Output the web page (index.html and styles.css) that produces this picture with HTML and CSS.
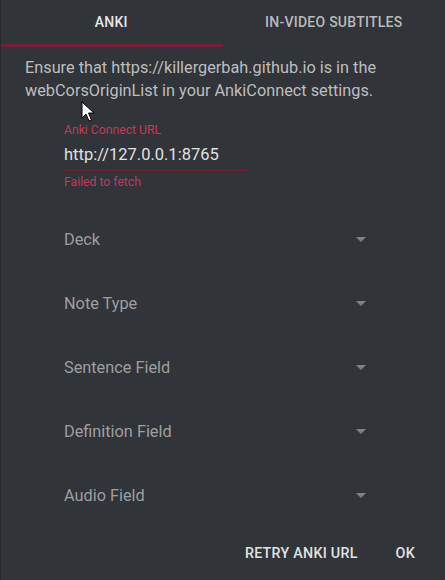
FILE: index.html
```html
<!DOCTYPE html>
<html>
<head>
<meta charset="utf-8">
<link rel="stylesheet" href="styles.css">
</head>
<body>
<div class="dialog">
  <div class="tabs">
    <div class="tab active">ANKI</div>
    <div class="tab">IN-VIDEO SUBTITLES</div>
  </div>
  <div class="content">
    <p class="intro">Ensure that https://killergerbah.github.io is in the webCorsOriginList in your AnkiConnect settings.</p>
    <div class="form">
      <div class="textfield">
        <div class="tf-label">Anki Connect URL</div>
        <div class="tf-input">http://127.0.0.1:8765</div>
        <div class="tf-helper">Failed to fetch</div>
      </div>
      <div class="selects">
        <div class="select"><span class="sel-label">Deck</span><span class="arrow"></span></div>
        <div class="select"><span class="sel-label">Note Type</span><span class="arrow"></span></div>
        <div class="select"><span class="sel-label">Sentence Field</span><span class="arrow"></span></div>
        <div class="select"><span class="sel-label">Definition Field</span><span class="arrow"></span></div>
        <div class="select"><span class="sel-label">Audio Field</span><span class="arrow"></span></div>
      </div>
    </div>
  </div>
  <div class="actions">
    <span class="btn">RETRY ANKI URL</span>
    <span class="btn">OK</span>
  </div>
  <svg class="cursor" width="14" height="22" viewBox="0 0 14 22"><path d="M1 1 L1 17 L5 13 L8 20 L10.5 19 L7.5 12 L13 12 Z" fill="#fff" stroke="#000" stroke-width="1"/></svg>
</div>
</body>
</html>
```
FILE: styles.css
```css
html, body {
  margin: 0;
  padding: 0;
  background: #313438;
}
.dialog {
  position: relative;
  width: 445px;
  height: 580px;
  box-sizing: border-box;
  border-left: 1px solid #26282b;
  font-family: Roboto, "Liberation Sans", sans-serif;
  display: flex;
  flex-direction: column;
  overflow: hidden;
}
.tabs {
  display: flex;
  height: 47px;
  margin-left: -1px;
}
.tab {
  flex: 1;
  display: flex;
  align-items: center;
  justify-content: center;
  font-size: 14px;
  font-weight: 500;
  letter-spacing: 0.25px;
  color: #b9babb;
  padding-bottom: 3px;
  box-sizing: border-box;
}
.tab.active {
  color: #e6e6e6;
  border-bottom: 3px solid #7b1c3a;
  padding-bottom: 0;
}
.content {
  padding: 9px 0 0 24px;
  flex: 1;
}
.intro {
  margin: 0;
  font-size: 16.3px;
  line-height: 23px;
  color: #bdbebf;
  width: 410px;
}
.form {
  padding-left: 39px;
  padding-top: 21px;
}
.textfield {
  width: 183px;
}
.tf-label {
  font-size: 12.2px;
  line-height: 14px;
  color: #c13a5c;
}
.tf-input {
  font-size: 16.5px;
  line-height: 20px;
  color: #e0e0e0;
  padding: 8px 0 4px;
  border-bottom: 2px solid #7a1a30;
}
.tf-helper {
  font-size: 12.2px;
  line-height: 14px;
  margin-top: 4px;
  color: #c13a5c;
}
.selects {
  margin-top: 18px;
}
.select {
  width: 306px;
  height: 64px;
  display: flex;
  align-items: center;
  justify-content: space-between;
  position: relative;
}
.select::after {
  content: "";
  position: absolute;
  left: 0;
  width: 192px;
  bottom: 15px;
  border-bottom: 1px solid #2f3236;
}
.sel-label {
  font-size: 16.3px;
  color: #9d9fa1;
}
.arrow {
  width: 0;
  height: 0;
  border-left: 5px solid transparent;
  border-right: 5px solid transparent;
  border-top: 5px solid #7f8184;
  margin-right: 4px;
}
.actions {
  display: flex;
  justify-content: flex-end;
  gap: 38px;
  padding: 0 30px 19px 0;
}
.btn {
  font-size: 14.3px;
  font-weight: 500;
  color: #e2e2e2;
  letter-spacing: 0.25px;
}
.cursor {
  position: absolute;
  left: 80px;
  top: 101px;
}
```
